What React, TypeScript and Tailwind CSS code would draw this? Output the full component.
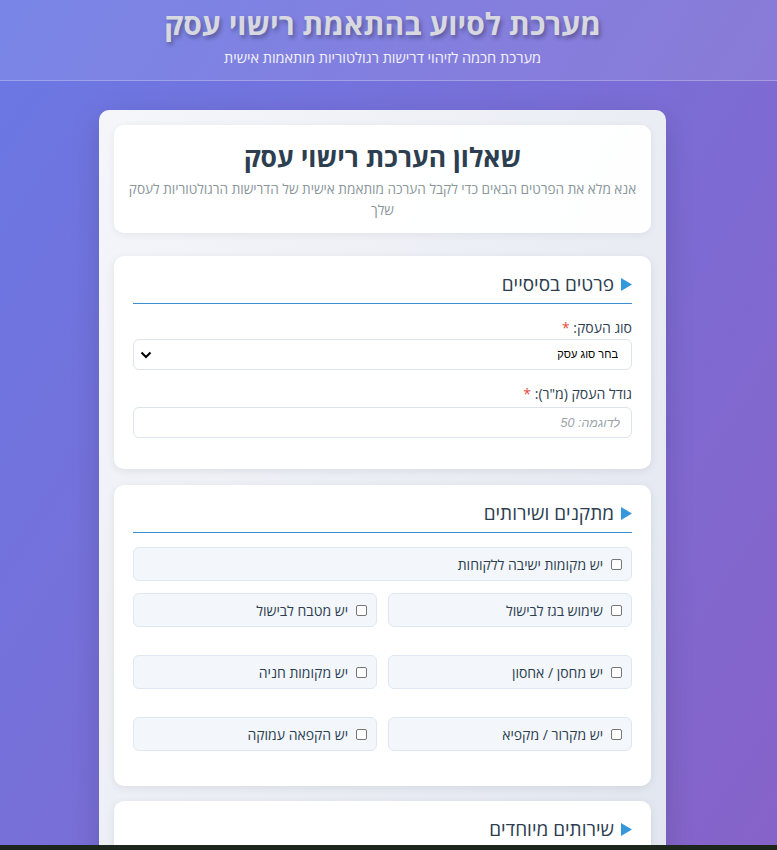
import React from "react";

const font = "font-['Open_Sans','Liberation_Sans',sans-serif]";

const SectionTitle = ({ children }: { children: React.ReactNode }) => (
  <div className="flex items-center gap-[7px] border-b border-[#3d8fd0] pb-[6px] mb-[14px] h-[48px] pt-[15px] box-border">
    <svg width="11" height="13" viewBox="0 0 11 13" className="shrink-0">
      <path d="M0 0 L11 6.5 L0 13 Z" fill="#3498db" />
    </svg>
    <h3 className="text-[19px] leading-[26px] font-normal text-[#2c3e50]">{children}</h3>
  </div>
);

const CheckItem = ({ label }: { label: string }) => (
  <label className="flex items-center gap-[8px] h-[34px] px-[9px] rounded-[6px] bg-[#f3f7fb] border border-[#dde8f3] text-[14px] text-[#2c3e50] cursor-pointer">
    <span className="w-[11px] h-[11px] rounded-[2px] border border-[#767676] bg-white shrink-0" />
    <span>{label}</span>
  </label>
);

export default function App() {
  return (
    <div dir="rtl" className={`${font} min-h-[1200px] bg-gradient-to-br from-[#6a78e4] to-[#8a5fc4]`}>
      {/* header */}
      <header className="h-[81px] bg-white/10 border-b border-white/25 pr-[12px] text-center pt-[5px]">
        <h1 className="text-[30px] leading-[38px] font-bold text-[#d7d8e0] [text-shadow:2px_3px_4px_rgba(0,0,0,0.3)]">
          מערכת לסיוע בהתאמת רישוי עסק
        </h1>
        <p className="text-[14.5px] leading-[22px] text-white/90 mt-[4px]">מערכת חכמה לזיהוי דרישות רגולטוריות מותאמות אישית</p>
      </header>

      <div className="pr-[12px] pt-[29px]">
        <main className="w-[567px] mx-auto rounded-[10px] p-[15px] bg-gradient-to-br from-[#f5f6fa] to-[#dfe4ee] shadow-[0_10px_30px_rgba(0,0,0,0.15)]">
          {/* intro card */}
          <section className="rounded-[10px] bg-white/95 shadow-[0_2px_8px_rgba(0,0,0,0.06)] px-[13px] pt-[14px] pb-[13px] mb-[23px] text-center">
            <h2 className="text-[26.5px] leading-[36px] font-bold text-[#2c3e50] mb-[3px]">שאלון הערכת רישוי עסק</h2>
            <p className="text-[13.6px] leading-[21px] text-[#8a969c]">
              אנא מלא את הפרטים הבאים כדי לקבל הערכה מותאמת אישית של הדרישות הרגולטוריות לעסק שלך
            </p>
          </section>

          {/* basic details */}
          <section className="rounded-[10px] bg-white shadow-[0_2px_8px_rgba(0,0,0,0.08)] px-[19px] pb-[19px] mb-[16px]">
            <SectionTitle>פרטים בסיסיים</SectionTitle>
            <div className="mb-[14px]">
              <label className="block text-[14px] leading-[20px] text-[#2c3e50] mb-[1px]">
                סוג העסק: <span className="text-[#e74c3c]">*</span>
              </label>
              <div className="relative">
                <select className="appearance-none w-full h-[31px] rounded-[6px] border border-[#dde4ee] bg-white pr-[13px] pl-[8px] text-[11px] font-normal text-black font-['Liberation_Sans',sans-serif]">
                  <option>בחר סוג עסק</option>
                </select>
                <svg width="12" height="8" viewBox="0 0 12 8" className="absolute left-[7px] top-[12px] pointer-events-none">
                  <path d="M1.5 1.5 L6 6 L10.5 1.5" stroke="#000" strokeWidth="2" fill="none" />
                </svg>
              </div>
            </div>
            <div className="mb-[12px]">
              <label className="block text-[14px] leading-[20px] text-[#2c3e50] mb-[3px]">
                גודל העסק (מ"ר): <span className="text-[#e74c3c]">*</span>
              </label>
              <input
                type="number"
                placeholder="לדוגמה: 50"
                className="w-full h-[31px] rounded-[6px] border border-[#dde4ee] bg-white px-[11px] text-[12.5px] placeholder:italic placeholder:text-[#9aa3aa] font-['Liberation_Sans',sans-serif]"
              />
            </div>
          </section>

          {/* facilities */}
          <section className="rounded-[10px] bg-white shadow-[0_2px_8px_rgba(0,0,0,0.08)] px-[19px] pb-[35px] mb-[15px]">
            <SectionTitle>מתקנים ושירותים</SectionTitle>
            <div className="mt-[1px] mb-[12px]">
              <CheckItem label="יש מקומות ישיבה ללקוחות" />
            </div>
            <div className="grid grid-cols-2 gap-x-[11px] gap-y-[28px]">
              <CheckItem label="שימוש בגז לבישול" />
              <CheckItem label="יש מטבח לבישול" />
              <CheckItem label="יש מחסן / אחסון" />
              <CheckItem label="יש מקומות חניה" />
              <CheckItem label="יש מקרור / מקפיא" />
              <CheckItem label="יש הקפאה עמוקה" />
            </div>
          </section>

          {/* special services */}
          <section className="rounded-[10px] bg-white shadow-[0_2px_8px_rgba(0,0,0,0.08)] px-[19px] pb-[200px]">
            <SectionTitle>שירותים מיוחדים</SectionTitle>
          </section>
        </main>
      </div>

      <div className="fixed bottom-0 left-0 right-0 h-[5px] bg-[#1d261d]" />
    </div>
  );
}
